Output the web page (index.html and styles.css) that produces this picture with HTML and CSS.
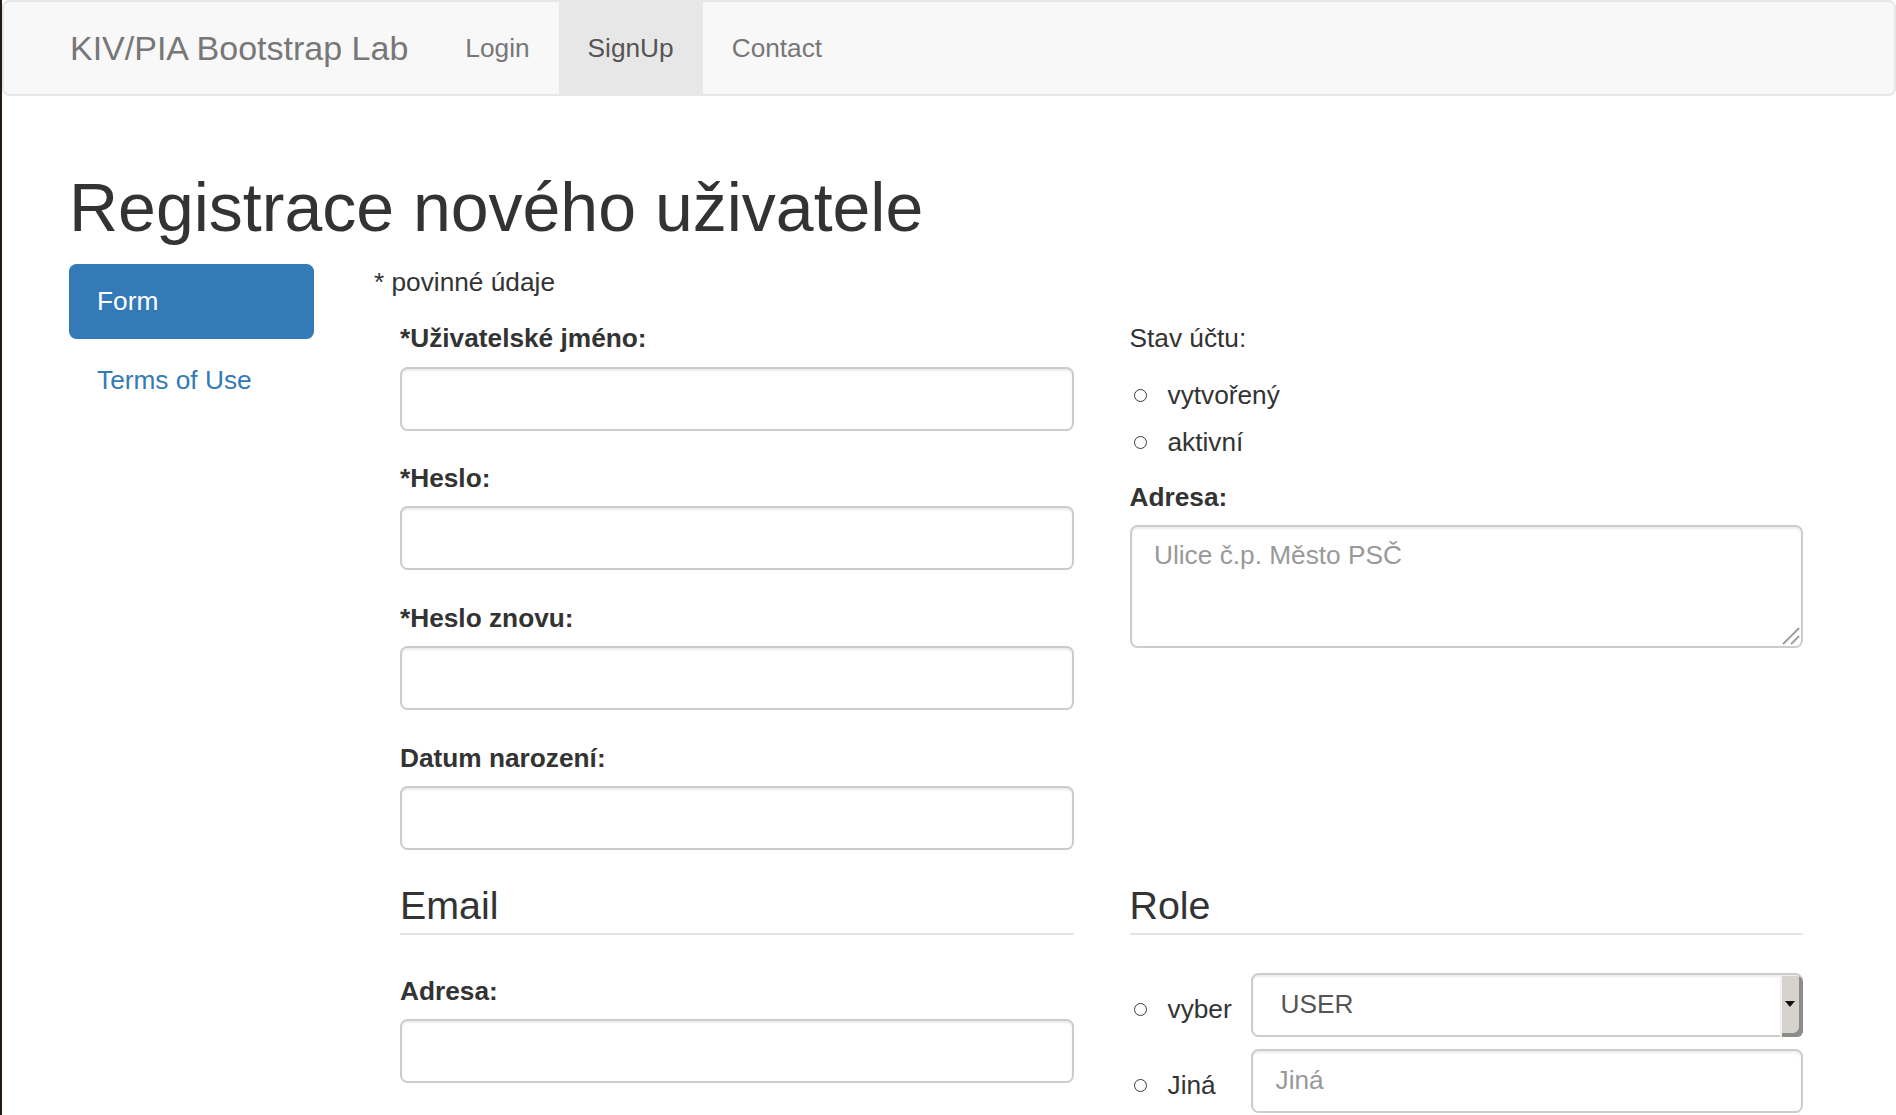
FILE: index.html
```html
<!DOCTYPE html>
<html lang="cs">
<head>
<meta charset="utf-8">
<title>KIV/PIA Bootstrap Lab</title>
<link rel="stylesheet" href="styles.css">
</head>
<body>
<nav class="navbar">
  <a class="brand" href="#">KIV/PIA Bootstrap Lab</a>
  <ul class="nav">
    <li><a href="#">Login</a></li>
    <li class="active"><a href="#">SignUp</a></li>
    <li><a href="#">Contact</a></li>
  </ul>
</nav>
<main class="container">
  <h1 class="title">Registrace nového uživatele</h1>
  <div class="layout">
    <ul class="pills">
      <li class="active"><a href="#">Form</a></li>
      <li><a href="#">Terms of Use</a></li>
    </ul>
    <form class="form">
      <p class="note">* povinné údaje</p>
      <div class="grid">
        <div class="col">
          <div class="group">
            <label class="label">*Uživatelské jméno:</label>
            <input class="field" type="text">
          </div>
          <div class="group">
            <label class="label">*Heslo:</label>
            <input class="field" type="password">
          </div>
          <div class="group">
            <label class="label">*Heslo znovu:</label>
            <input class="field" type="password">
          </div>
          <div class="group last">
            <label class="label">Datum narození:</label>
            <input class="field" type="text">
          </div>
        </div>
        <div class="col">
          <div class="status-label">Stav účtu:</div>
          <div class="radios">
            <div class="radio"><span class="circle"></span><span>vytvořený</span></div>
            <div class="radio"><span class="circle"></span><span>aktivní</span></div>
          </div>
          <label class="label">Adresa:</label>
          <div class="area-wrap">
            <textarea class="field area" placeholder="Ulice č.p. Město PSČ"></textarea>
            <svg class="grip" width="20" height="20" viewBox="0 0 20 20"><path d="M3 19 L19 3 M11 19 L19 11" stroke="#8a8a8a" stroke-width="1.6" fill="none"/><path d="M4 19.8 L19.8 4 M12 19.8 L19.8 12" stroke="#d8d8d8" stroke-width="1" fill="none"/></svg>
          </div>
        </div>
        <div class="col">
          <div class="legend">Email</div>
          <div class="group">
            <label class="label">Adresa:</label>
            <input class="field" type="email">
          </div>
        </div>
        <div class="col">
          <div class="legend">Role</div>
          <div class="role-row">
            <div class="role-label"><span class="circle"></span><span>vyber</span></div>
            <div class="select">
              <span class="select-text">USER</span>
              <span class="select-btn"><span class="tri"></span></span>
            </div>
          </div>
          <div class="role-row">
            <div class="role-label"><span class="circle"></span><span>Jiná</span></div>
            <input class="field role-input" type="text" placeholder="Jiná">
          </div>
        </div>
      </div>
    </form>
  </div>
</main>
</body>
</html>
```

FILE: styles.css
```css
html {
  overflow: hidden;
}

body {
  margin: 0;
  min-height: 1115px;
  box-sizing: border-box;
  border-left: 2px solid #231a12;
  background: #fff;
  color: #333;
  font-family: "Liberation Sans", Arial, Helvetica, sans-serif;
  font-size: 26.25px;
  line-height: 37.5px;
}

/* navbar */
.navbar {
  display: flex;
  align-items: stretch;
  height: 92px;
  padding-left: 38px;
  background: #f8f8f8;
  border: 2px solid #e7e7e7;
  border-radius: 7.5px;
}

.brand {
  display: block;
  padding: 0 28px;
  font-size: 34px;
  line-height: 92px;
  color: #777;
  text-decoration: none;
}

.nav {
  display: flex;
  margin: 0;
  padding: 0;
  list-style: none;
}

.nav a {
  display: block;
  padding: 0 29px;
  line-height: 92px;
  color: #777;
  text-decoration: none;
}

.nav .active a {
  background: #e7e7e7;
  color: #555;
}

/* page */
.container {
  padding-left: 67px;
}

.title {
  margin: 73px 0 19px;
  font-size: 68px;
  line-height: 76px;
  font-weight: 500;
  color: #333;
}

.layout {
  display: flex;
  gap: 60px;
}

.pills {
  flex: none;
  width: 245px;
  margin: 0;
  padding: 0;
  list-style: none;
}

.pills a {
  display: block;
  padding: 18.75px 28px;
  border-radius: 7.5px;
  color: #337ab7;
  text-decoration: none;
}

.pills li + li {
  margin-top: 4px;
}

.pills .active a {
  background: #337ab7;
  color: #fff;
}

.form {
  flex: none;
  margin: 0;
}

.note {
  margin: 0 0 18.5px;
}

.grid {
  display: grid;
  grid-template-columns: 673.5px 673.5px;
  column-gap: 56px;
  padding-left: 26px;
  align-items: start;
}

.group {
  margin-bottom: 29.4px;
}

.group.last {
  margin-bottom: 26.8px;
}

.label {
  display: block;
  margin-bottom: 9px;
  font-weight: 700;
}

.field {
  display: block;
  box-sizing: border-box;
  width: 100%;
  height: 64px;
  margin: 0;
  padding: 11px 22.5px;
  background: #fff;
  border: 2px solid #ccc;
  border-radius: 7.5px;
  box-shadow: inset 0 2px 2px rgba(0, 0, 0, 0.075);
  font: inherit;
  color: #555;
  outline: none;
}

.field::placeholder {
  color: #999;
}

/* right column */
.status-label {
  margin-bottom: 19.5px;
}

.radios {
  margin-bottom: 17.5px;
}

.radio {
  display: flex;
  align-items: center;
  height: 37.5px;
}

.radio + .radio {
  margin-top: 9px;
}

.circle {
  flex: none;
  box-sizing: border-box;
  width: 13px;
  height: 13px;
  margin-left: 4px;
  margin-right: 21px;
  border: 1.5px solid #3a3a3a;
  border-radius: 50%;
  background: #fff;
}

.area-wrap {
  position: relative;
  margin-top: 6.7px;
}

.area {
  height: 122.5px;
  padding: 9.5px 22.5px;
  resize: none;
  line-height: 37.5px;
}

.grip {
  position: absolute;
  right: 3px;
  bottom: 3px;
}

/* legends */
.legend {
  margin-bottom: 37.5px;
  font-size: 39.4px;
  line-height: 56.25px;
  color: #333;
  border-bottom: 2px solid #e5e5e5;
}

/* role */
.role-row {
  display: flex;
  align-items: center;
}

.role-row + .role-row {
  margin-top: 12px;
}

.role-label {
  flex: none;
  display: flex;
  align-items: center;
  width: 121.5px;
  padding-top: 10px;
}

.select {
  flex: 1;
  display: flex;
  align-items: stretch;
  box-sizing: border-box;
  height: 64px;
  background: #fff;
  border: 2px solid #ccc;
  border-radius: 7.5px;
  box-shadow: inset 0 2px 2px rgba(0, 0, 0, 0.075);
  color: #555;
}

.select-text {
  flex: 1;
  display: flex;
  align-items: center;
  padding-left: 27.5px;
}

.select-btn {
  flex: none;
  display: flex;
  align-items: center;
  justify-content: center;
  box-sizing: border-box;
  width: 23px;
  margin: 1px -2px -2px 0;
  padding-right: 3px;
  background: #d6d3ce;
  border-radius: 0 6px 6px 0;
  box-shadow: inset 2px 0 0 #f2f1ef, inset -4px -4px 0 #8e8c89;
}

.tri {
  width: 0;
  height: 0;
  margin-top: -4px;
  border-left: 5px solid transparent;
  border-right: 5px solid transparent;
  border-top: 6px solid #111;
}

.role-input {
  flex: 1;
  width: auto;
}
```
